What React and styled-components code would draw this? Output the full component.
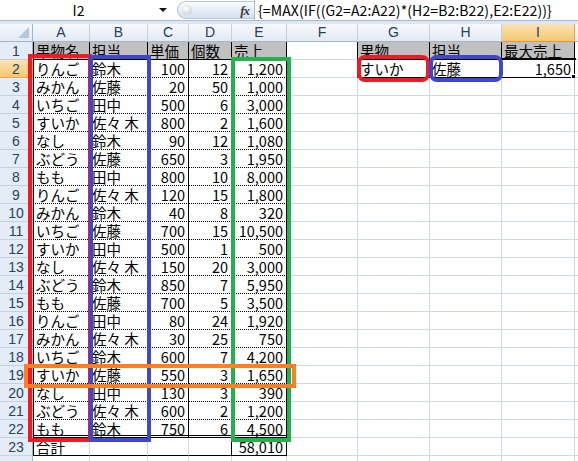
import React from 'react'
import styled, { createGlobalStyle } from 'styled-components'

const GlobalStyle = createGlobalStyle`
  html, body {
    margin: 0;
    padding: 0;
    background: #fff;
    overflow: hidden;
  }
`;

const JP = `"Noto Sans CJK JP", "Noto Sans", sans-serif`;

const Page = styled.div`
  position: relative;
  width: 578px;
  height: 461px;
  overflow: hidden;
  background: #fff;
`;

const FormulaBar = styled.div`
  display: flex;
  align-items: stretch;
  height: 20px;
  border-bottom: 1px solid #a7bad0;
  background: #fff;
`;

const NameBox = styled.div`
  display: flex;
  align-items: center;
  width: 175px;
  font: 14px/20px ${JP};
  color: #000;
`;

const NameText = styled.div`
  flex: 1;
  text-align: center;
  padding-right: 2px;
`;

const Arrow = styled.div`
  width: 0;
  height: 0;
  margin-right: 8px;
  border-left: 4px solid transparent;
  border-right: 4px solid transparent;
  border-top: 4px solid #111;
`;

const Pill = styled.div`
  display: flex;
  align-items: center;
  justify-content: space-between;
  box-sizing: border-box;
  width: 77px;
  margin: 1px 0 1px 2px;
  padding: 0 5px 0 4px;
  border: 1px solid #b3c3d8;
  border-right: none;
  border-radius: 10px 0 0 10px;
  background: linear-gradient(to bottom, #fbfcfe 0%, #e6edf7 50%, #d4e0ef 100%);
`;

const Knob = styled.div`
  width: 10px;
  height: 10px;
  border-radius: 50%;
  background: radial-gradient(circle at 40% 35%, #ffffff 0%, #d9dde3 60%, #b9c0ca 100%);
`;

const Fx = styled.span`
  font: italic bold 13px/1 "Liberation Serif", serif;
  color: #3a3a3a;
  letter-spacing: -1px;
`;

const FormulaText = styled.div`
  flex: 1;
  padding-left: 3px;
  border-left: 1px solid #a7bad0;
  font: 14px/20px ${JP};
  letter-spacing: 0.1px;
  color: #000;
  white-space: nowrap;
`;

const Strip = styled.div`
  height: 3px;
  background: #dde7f3;
`;

const Sheet = styled.div`
  display: grid;
  grid-template-columns: 33px 57px 58px 41px 43px 55px 71px 72px 72px 73px 80px;
  grid-auto-rows: 18px;
`;

const Corner = styled.div`
  position: relative;
  box-sizing: border-box;
  background: linear-gradient(to bottom, #f4f7fb, #e3eaf4);
  border-right: 1px solid #9eb6ce;
  border-bottom: 1px solid #9eb6ce;
  &::after {
    content: '';
    position: absolute;
    right: 3px;
    bottom: 3px;
    border-left: 11px solid transparent;
    border-bottom: 11px solid #b6c6da;
  }
`;

const ColHead = styled.div`
  box-sizing: border-box;
  text-align: center;
  font: 14px/17px "Liberation Sans", sans-serif;
  color: ${p => (p.$sel ? '#1f3a56' : '#27415f')};
  background: ${p =>
    p.$sel
      ? 'linear-gradient(to bottom, #fbe3b4, #f5c872)'
      : 'linear-gradient(to bottom, #f6f8fc, #e4eaf3)'};
  border-right: 1px solid ${p => (p.$sel ? '#f2a44a' : '#c5d1e0')};
  border-bottom: 1px solid ${p => (p.$sel ? '#f29436' : '#9eb6ce')};
`;

const RowHead = styled.div`
  box-sizing: border-box;
  text-align: center;
  font: 14px/18px "Liberation Sans", sans-serif;
  color: #27415f;
  background: ${p =>
    p.$sel ? 'linear-gradient(to bottom, #fbe3b4, #f5c872)' : '#e4ecf7'};
  border-right: 1px solid ${p => (p.$sel ? '#f29436' : '#9eb6ce')};
  border-bottom: 1px solid ${p => (p.$sel ? '#f2a44a' : '#c5d1e0')};
`;

const GRID = '1px solid #d0d7e5';

const Cell = styled.div`
  position: relative;
  box-sizing: border-box;
  padding: 0 3px 0 2px;
  font: 14.5px/18px ${JP};
  color: #000;
  white-space: nowrap;
  text-align: ${p => (p.$num ? 'right' : 'left')};
  background: ${p => p.$bg || '#fff'};
  border-right: ${p => p.$r || GRID};
  border-bottom: ${p => p.$b || GRID};
  border-left: ${p => p.$l || 'none'};
`;

const Selection = styled.div`
  position: absolute;
  top: -2px;
  left: -2px;
  right: -2px;
  bottom: -2px;
  border: 2px solid #000;
  pointer-events: none;
  &::after {
    content: '';
    position: absolute;
    right: -4px;
    bottom: -4px;
    width: 5px;
    height: 5px;
    background: #000;
    border: 1px solid #fff;
  }
`;

const Mark = styled.div`
  position: absolute;
  box-sizing: border-box;
  left: ${p => p.$x}px;
  top: ${p => p.$y}px;
  width: ${p => p.$w}px;
  height: ${p => p.$h}px;
  border: 4px solid ${p => p.$color};
  border-radius: ${p => p.$radius || 0}px;
  pointer-events: none;
`;

const data = [
  ['りんご', '鈴木', 100, 12, 1200],
  ['みかん', '佐藤', 20, 50, 1000],
  ['いちご', '田中', 500, 6, 3000],
  ['すいか', '佐々 木', 800, 2, 1600],
  ['なし', '鈴木', 90, 12, 1080],
  ['ぶどう', '佐藤', 650, 3, 1950],
  ['もも', '田中', 800, 10, 8000],
  ['りんご', '佐々 木', 120, 15, 1800],
  ['みかん', '鈴木', 40, 8, 320],
  ['いちご', '佐藤', 700, 15, 10500],
  ['すいか', '田中', 500, 1, 500],
  ['なし', '佐々 木', 150, 20, 3000],
  ['ぶどう', '鈴木', 850, 7, 5950],
  ['もも', '佐藤', 700, 5, 3500],
  ['りんご', '田中', 80, 24, 1920],
  ['みかん', '佐々 木', 30, 25, 750],
  ['いちご', '鈴木', 600, 7, 4200],
  ['すいか', '佐藤', 550, 3, 1650],
  ['なし', '田中', 130, 3, 390],
  ['ぶどう', '佐々 木', 600, 2, 1200],
  ['もも', '鈴木', 750, 6, 4500],
];

const fmt = n => n.toLocaleString('en-US');
const total = data.reduce((s, r) => s + r[4], 0);
const letters = ['A', 'B', 'C', 'D', 'E', 'F', 'G', 'H', 'I', ''];

const BLACK = '1px solid #000';
const GRAY = '#c0c0c0';

// build the cells of one sheet row: 10 columns A..J
function rowCells(n) {
  const cells = [];
  const isData = n >= 2 && n <= 22;
  const rec = isData ? data[n - 2] : null;

  for (let c = 0; c < 10; c++) {
    let props = {};
    let text = '';

    if (c <= 4 && n <= 23) {
      // main table A1:E23
      props.$r = BLACK;
      props.$b = n === 1 || n === 23 ? BLACK : n === 22 ? '3px double #000' : '1px dotted #000';
      if (c === 0) props.$l = BLACK;
      if (n === 1) {
        props.$bg = GRAY;
        text = ['果物名', '担当', '単価', '個数', '売上'][c];
      } else if (rec) {
        text = c >= 2 ? fmt(rec[c]) : rec[c];
        props.$num = c >= 2;
      } else if (n === 23) {
        if (c < 3) props.$r = GRID;
        if (c === 0) text = '合計';
        if (c === 4) {
          text = fmt(total);
          props.$num = true;
        }
      }
    } else if (c === 5 && n <= 2) {
      props.$r = BLACK;
    } else if (c >= 6 && c <= 8 && n <= 2) {
      props.$r = BLACK;
      props.$b = BLACK;
      if (n === 1) {
        props.$bg = GRAY;
        text = ['果物', '担当', '最大売上'][c - 6];
      } else {
        text = ['すいか', '佐藤', '1,650'][c - 6];
        props.$num = c === 8;
      }
    }

    cells.push(
      <Cell key={c} {...props}>
        {text}
        {n === 2 && c === 8 && <Selection />}
      </Cell>
    );
  }
  return cells;
}

const App = () => {
  const rows = [];
  // row 24 only peeks in at the bottom edge, its number is below the fold
  for (let n = 1; n <= 24; n++) {
    rows.push(
      <React.Fragment key={n}>
        <RowHead $sel={n === 2}>{n < 24 ? n : ''}</RowHead>
        {rowCells(n)}
      </React.Fragment>
    );
  }

  return (
    <Page>
      <GlobalStyle />
      <FormulaBar>
        <NameBox>
          <NameText>I2</NameText>
          <Arrow />
        </NameBox>
        <Pill>
          <Knob />
          <Fx>fx</Fx>
        </Pill>
        <FormulaText>{'{=MAX(IF((G2=A2:A22)*(H2=B2:B22),E2:E22))}'}</FormulaText>
      </FormulaBar>
      <Strip />
      <Sheet>
        <Corner />
        {letters.map((l, i) => (
          <ColHead key={i} $sel={l === 'I'}>{l}</ColHead>
        ))}
        {rows}
      </Sheet>

      <Mark $color="#ed1c24" $x={28} $y={54} $w={64} $h={388} />
      <Mark $color="#3f48cc" $x={89} $y={55} $w={62} $h={387} />
      <Mark $color="#22b14c" $x={231} $y={57} $w={60} $h={385} />
      <Mark $color="#ff7f27" $x={24} $y={364} $w={272} $h={24} />
      <Mark $color="#ed1c24" $x={357} $y={55} $w={73} $h={27} $radius={8} />
      <Mark $color="#3f48cc" $x={429} $y={55} $w={74} $h={27} $radius={8} />
    </Page>
  )
}

export default App
